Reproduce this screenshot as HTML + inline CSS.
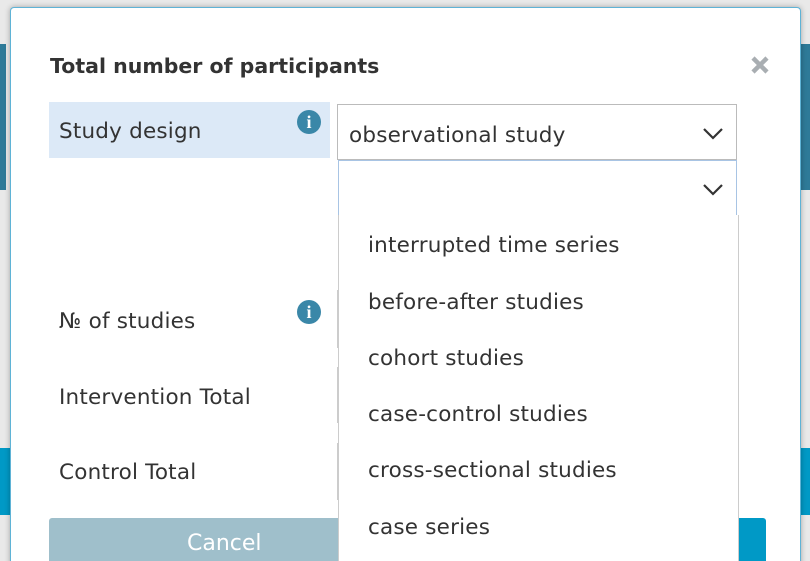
<html style="overflow:hidden;height:561px"><head><style>
body{margin:0;width:810px;height:561px;overflow:hidden;background:#e9e9e9;position:relative;font-family:"DejaVu Sans",sans-serif;color:#333}
.a{position:absolute}
.modal{left:10px;top:7px;width:789px;height:560px;background:#fff;border:1px solid #5fb3d6;border-bottom:none;border-radius:4px 4px 0 0;box-shadow:0 0 6px rgba(0,0,0,.3)}
.info{width:24px;height:24px;border-radius:50%;background:#3a87a8;color:#fff;font:bold 18px "Liberation Serif",serif;text-align:center;line-height:24px}
.lbl{font-size:21.5px;color:#333;letter-spacing:0.2px}
.item{left:368px;font-size:21.5px;color:#333;letter-spacing:0.2px}
</style></head><body>
<div class="a" style="left:0;top:44px;width:6px;height:146px;background:#2e7a98"></div>
<div class="a" style="left:800px;top:44px;width:10px;height:146px;background:#2e7a98"></div>
<div class="a" style="left:0;top:448px;width:10px;height:67px;background:#0099c6"></div>
<div class="a" style="left:800px;top:448px;width:10px;height:67px;background:#0099c6"></div>
<div class="a modal"></div>
<div class="a" style="left:50px;top:54px;font-weight:bold;font-size:20.5px;color:#333">Total number of participants</div>
<svg class="a" style="left:750px;top:55px" width="20" height="20"><path d="M3 3l14 14M17 3L3 17" stroke="#a9aeb2" stroke-width="4.5"/></svg>
<div class="a" style="left:49px;top:102px;width:281px;height:56px;background:#dce9f7"></div>
<div class="a lbl" style="left:59px;top:119px">Study design</div>
<div class="a info" style="left:297px;top:110px">i</div>
<div class="a" style="left:337px;top:104px;width:398px;height:54px;border:1px solid #bbb;background:#fff"></div>
<div class="a lbl" style="left:349px;top:123px">observational study</div>
<svg class="a" style="left:702px;top:127px" width="22" height="14"><path d="M2 2l9 9 9-9" stroke="#333" stroke-width="2.2" fill="none"/></svg>
<div class="a" style="left:338px;top:160px;width:397px;height:54px;border:1px solid #a8c4e4;background:#fff"></div>
<svg class="a" style="left:702px;top:183px" width="22" height="14"><path d="M2 2l9 9 9-9" stroke="#333" stroke-width="2.2" fill="none"/></svg>
<div class="a lbl" style="left:59px;top:309px">№ of studies</div>
<div class="a info" style="left:297px;top:300px">i</div>
<div class="a lbl" style="left:59px;top:385px">Intervention Total</div>
<div class="a lbl" style="left:59px;top:460px">Control Total</div>
<div class="a" style="left:337px;top:290px;width:2px;height:58px;background:#ccc"></div>
<div class="a" style="left:337px;top:367px;width:2px;height:56px;background:#ccc"></div>
<div class="a" style="left:337px;top:443px;width:2px;height:57px;background:#ccc"></div>
<div class="a" style="left:49px;top:518px;width:300px;height:43px;background:#9fbfcb;border-radius:3px 3px 0 0;color:#fff;font-size:22px;line-height:52px"><span style="position:absolute;left:138px">Cancel</span></div>
<div class="a" style="left:720px;top:518px;width:46px;height:43px;background:#0099c6;border-radius:3px 3px 0 0"></div>
<div class="a" style="left:338px;top:215px;width:399px;height:346px;border:1px solid #ccc;border-top:none;border-bottom:none;background:#fff"></div>
<div class="a item" style="top:233px">interrupted time series</div>
<div class="a item" style="top:290px">before-after studies</div>
<div class="a item" style="top:346px">cohort studies</div>
<div class="a item" style="top:402px">case-control studies</div>
<div class="a item" style="top:458px">cross-sectional studies</div>
<div class="a item" style="top:515px">case series</div>
</body></html>
